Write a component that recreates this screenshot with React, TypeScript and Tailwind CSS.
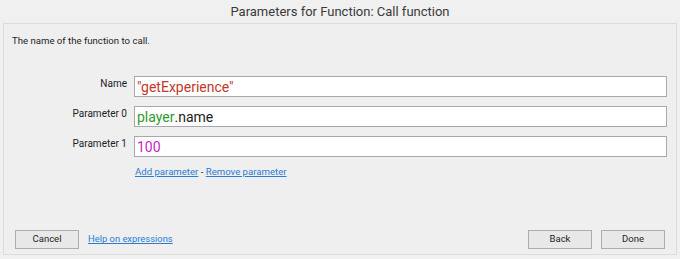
import React from "react";

const font = { fontFamily: "Roboto, 'Noto Sans', sans-serif" };

function Row({ label, children }: { label: string; children: React.ReactNode }) {
  return (
    <div className="flex items-start">
      <div className="w-[127px] pt-[1px] pr-[4px] text-right text-[10px] leading-[14px] text-[#1e1e1e]">{label}</div>
      <div className="ml-[3px] flex h-[21px] w-[533px] items-center border border-[#a9a9a9] bg-white pl-[2px] text-[14px] leading-none">
        {children}
      </div>
    </div>
  );
}

function Btn({ children }: { children: React.ReactNode }) {
  return (
    <div className="flex h-[19px] w-[64px] items-center justify-center border border-[#adadad] bg-[#e8e8e8] text-[9.5px] text-[#1e1e1e]">
      {children}
    </div>
  );
}

export default function App() {
  return (
    <div className="flex h-[259px] w-[680px] flex-col bg-[#f0f0f0]" style={font}>
      <div className="flex h-[23px] items-center justify-center text-[13px] text-[#3a3a3a]">
        Parameters for Function: Call function
      </div>
      <div className="mx-[3px] flex h-[232px] flex-col border border-[#dcdcdc] bg-[#efefef]">
        <div className="pl-[8px] pt-[10px] text-[9.6px] leading-[13px] text-[#1e1e1e]">The name of the function to call.</div>
        <div className="mt-[29px] flex flex-col gap-[9px]">
          <Row label="Name">
            <span className="text-[#c0392b]">"getExperience"</span>
          </Row>
          <Row label="Parameter 0">
            <span className="text-[#2e9a2e]">player</span>
            <span className="text-[#222]">.name</span>
          </Row>
          <Row label="Parameter 1">
            <span className="text-[#c71fc7]">100</span>
          </Row>
        </div>
        <div className="ml-[131px] mt-[8px] text-[9.6px] leading-[13px] text-[#1e1e1e]">
          <span className="text-[#2b7cd3] underline">Add parameter</span>
          <span> - </span>
          <span className="text-[#2b7cd3] underline">Remove parameter</span>
        </div>
        <div className="mt-auto mb-[5px] flex items-center px-[11px]">
          <Btn>Cancel</Btn>
          <span className="ml-[9px] text-[9.4px] text-[#2b7cd3] underline">Help on expressions</span>
          <div className="ml-auto flex gap-[9px]">
            <Btn>Back</Btn>
            <Btn>Done</Btn>
          </div>
        </div>
      </div>
    </div>
  );
}
